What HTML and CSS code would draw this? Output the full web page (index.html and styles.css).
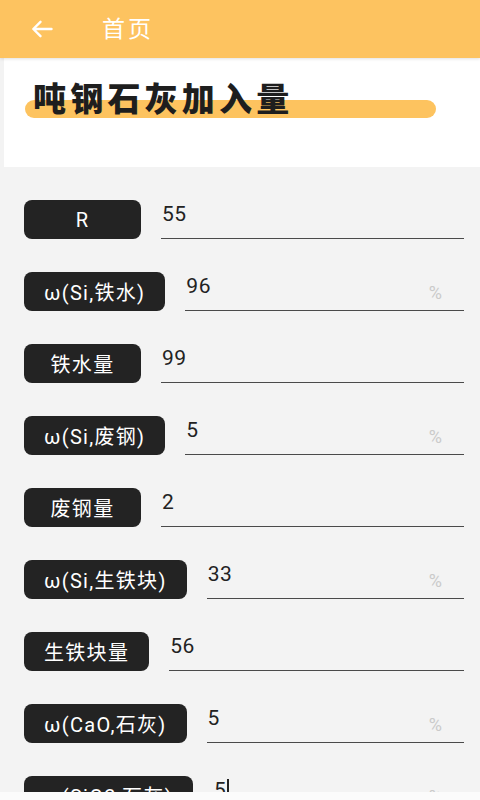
FILE: index.html
```html
<!DOCTYPE html>
<html lang="zh">
<head>
<meta charset="utf-8">
<title>首页</title>
<link rel="stylesheet" href="styles.css">
</head>
<body>
<header class="topbar">
  <svg class="back" width="22" height="18" viewBox="0 0 22 18" aria-hidden="true">
    <path d="M20.5 9H2.5M9.5 1.8L2.3 9l7.2 7.2" fill="none" stroke="#fff" stroke-width="2.4" stroke-linecap="round" stroke-linejoin="round"/>
  </svg>
  <span class="topbar-title">首页</span>
</header>
<section class="hero">
  <h1 class="hero-title">吨钢石灰加入量</h1>
</section>
<main class="form">
  <div class="row"><div class="label">R</div><div class="field"><span class="value">55</span></div></div>
  <div class="row"><div class="label">ω(Si,铁水)</div><div class="field"><span class="value">96</span><span class="unit">%</span></div></div>
  <div class="row"><div class="label">铁水量</div><div class="field"><span class="value">99</span></div></div>
  <div class="row"><div class="label">ω(Si,废钢)</div><div class="field"><span class="value">5</span><span class="unit">%</span></div></div>
  <div class="row"><div class="label">废钢量</div><div class="field"><span class="value">2</span></div></div>
  <div class="row"><div class="label">ω(Si,生铁块)</div><div class="field"><span class="value">33</span><span class="unit">%</span></div></div>
  <div class="row"><div class="label">生铁块量</div><div class="field"><span class="value">56</span></div></div>
  <div class="row"><div class="label">ω(CaO,石灰)</div><div class="field"><span class="value">5</span><span class="unit">%</span></div></div>
  <div class="row"><div class="label">ω(SiO2,石灰)</div><div class="field"><span class="value">5<span class="caret"></span></span><span class="unit">%</span></div></div>
</main>
<div class="bottom-strip"></div>
</body>
</html>
```

FILE: styles.css
```css
* { box-sizing: border-box; }
html, body {
  margin: 0;
  padding: 0;
  height: 100%;
  overflow: hidden;
}
body {
  background: #f3f3f3;
  font-family: Roboto, "Noto Sans CJK SC", sans-serif;
  color: #222;
}
.topbar {
  height: 58px;
  background: #fdc360;
  display: flex;
  align-items: center;
  padding-left: 31px;
  box-shadow: 0 1px 3px rgba(0,0,0,0.12);
  position: relative;
  z-index: 2;
}
.back { display: block; }
.topbar-title {
  margin-left: 49px;
  color: #fff;
  font-size: 23px;
  letter-spacing: 3px;
  line-height: 1;
}
.hero {
  background: #fff;
  height: 109px;
  margin-left: 4px;
  padding: 19px 0 0 29px;
}
.hero-title {
  position: relative;
  margin: 0;
  font-family: "Noto Sans CJK SC", sans-serif;
  font-size: 33px;
  font-weight: 900;
  letter-spacing: 4.2px;
  line-height: 40px;
  color: #1e1e1e;
  z-index: 0;
}
.hero-title::before {
  content: "";
  position: absolute;
  left: -8px;
  top: 23px;
  width: 411px;
  height: 18px;
  border-radius: 9px;
  background: #fdc35f;
  z-index: -1;
}
.form {
  padding: 33px 16px 0 24px;
  display: flex;
  flex-direction: column;
  gap: 33px;
}
.row {
  display: flex;
  height: 39px;
  gap: 20px;
}
.label {
  flex: none;
  min-width: 117px;
  padding: 0 20px;
  background: #232323;
  color: #fff;
  border-radius: 8px;
  display: flex;
  align-items: center;
  justify-content: center;
  font-size: 20px;
  letter-spacing: 1.3px;
  white-space: nowrap;
}
.field {
  flex: 1;
  display: flex;
  border-bottom: 1.5px solid #4a4a4a;
}
.value {
  font-size: 21px;
  line-height: 24px;
  padding-top: 2px;
  padding-left: 1px;
  color: #222;
  letter-spacing: 0.5px;
}
.caret {
  display: inline-block;
  width: 2px;
  height: 22px;
  background: #222;
  vertical-align: -4px;
  margin-left: 1px;
}
.unit {
  margin-left: auto;
  margin-right: 22px;
  align-self: center;
  color: #cacaca;
  font-size: 18px;
  padding-top: 2px;
}
.bottom-strip {
  position: fixed;
  left: 0;
  right: 0;
  bottom: 0;
  height: 8px;
  background: #fbfbfb;
  z-index: 3;
}
```
